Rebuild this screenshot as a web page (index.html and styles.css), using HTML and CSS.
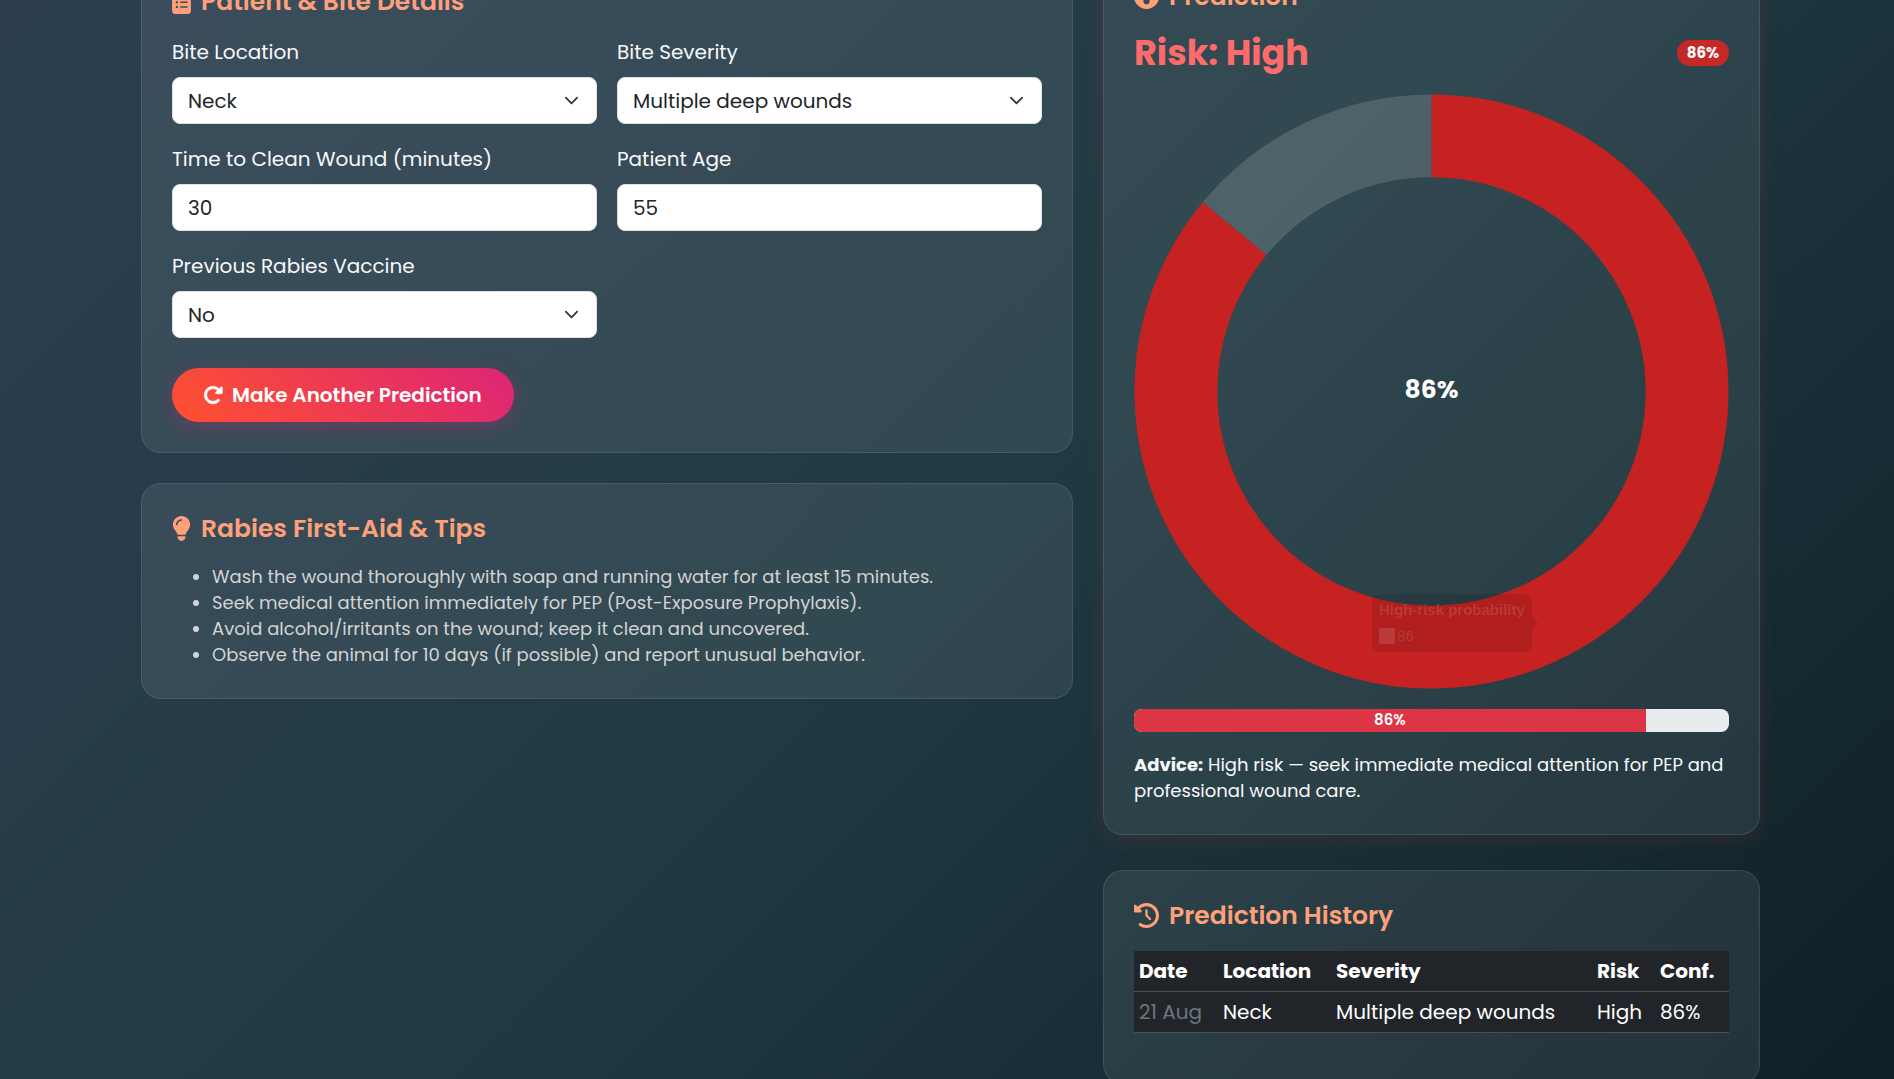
FILE: index.html
```html
<!DOCTYPE html>
<html lang="en">
<head>
<meta charset="utf-8">
<meta name="viewport" content="width=device-width, initial-scale=1">
<title>Rabies Risk Prediction</title>
<link rel="stylesheet" href="styles.css">
</head>
<body>
<main class="page">
  <div class="column">
    <section class="card">
      <h2 class="card-title">
        <svg class="icon" width="19" height="25" viewBox="0 0 384 512" aria-hidden="true"><path fill="currentColor" fill-rule="evenodd" d="M192 0c-41.800 0-77.400 26.700-90.500 64L64 64C28.700 64 0 92.700 0 128L0 448c0 35.300 28.700 64 64 64l256 0c35.300 0 64-28.700 64-64l0-320c0-35.300-28.700-64-64-64l-37.500 0C269.400 26.700 233.800 0 192 0zm0 64a32 32 0 1 1 0 64 32 32 0 1 1 0-64zM72 272a24 24 0 1 1 48 0 24 24 0 1 1-48 0zm104-16l128 0c8.800 0 16 7.200 16 16s-7.200 16-16 16l-128 0c-8.800 0-16-7.200-16-16s7.200-16 16-16zM72 368a24 24 0 1 1 48 0 24 24 0 1 1-48 0zm88 0c0-8.800 7.200-16 16-16l128 0c8.800 0 16 7.200 16 16s-7.200 16-16 16l-128 0c-8.800 0-16-7.200-16-16z"/></svg>
        Patient &amp; Bite Details
      </h2>
      <form>
        <div class="fields">
          <div class="field">
            <label for="location">Bite Location</label>
            <div class="select-wrap">
              <select class="control" id="location"><option>Neck</option></select>
              <svg class="chevron" viewBox="0 0 16 16" aria-hidden="true"><path d="m2 5 6 6 6-6"/></svg>
            </div>
          </div>
          <div class="field">
            <label for="severity">Bite Severity</label>
            <div class="select-wrap">
              <select class="control" id="severity"><option>Multiple deep wounds</option></select>
              <svg class="chevron" viewBox="0 0 16 16" aria-hidden="true"><path d="m2 5 6 6 6-6"/></svg>
            </div>
          </div>
          <div class="field">
            <label for="minutes">Time to Clean Wound (minutes)</label>
            <input class="control" id="minutes" type="text" inputmode="numeric" value="30">
          </div>
          <div class="field">
            <label for="age">Patient Age</label>
            <input class="control" id="age" type="text" inputmode="numeric" value="55">
          </div>
          <div class="field">
            <label for="vaccine">Previous Rabies Vaccine</label>
            <div class="select-wrap">
              <select class="control" id="vaccine"><option>No</option></select>
              <svg class="chevron" viewBox="0 0 16 16" aria-hidden="true"><path d="m2 5 6 6 6-6"/></svg>
            </div>
          </div>
        </div>
        <button class="predict" type="submit">
          <svg width="20" height="20" viewBox="0 0 512 512" aria-hidden="true"><path fill="currentColor" stroke="currentColor" stroke-width="16" d="M463.500 224l8.500 0c13.300 0 24-10.700 24-24l0-128c0-9.700-5.800-18.500-14.800-22.200s-19.300-1.700-26.200 5.200L413.400 96.600c-87.600-86.500-228.700-86.200-315.800 1c-87.500 87.500-87.500 229.300 0 316.800s229.300 87.500 316.800 0c12.500-12.500 12.500-32.800 0-45.300s-32.800-12.500-45.300 0c-62.500 62.500-163.800 62.500-226.300 0s-62.500-163.800 0-226.300c62.200-62.200 162.700-62.500 225.300-1L327 183c-6.900 6.900-8.900 17.200-5.200 26.200s12.500 14.800 22.200 14.800l119.500 0z"/></svg>
          Make Another Prediction
        </button>
      </form>
    </section>

    <section class="card">
      <h2 class="card-title">
        <svg class="icon" width="19" height="25" viewBox="0 0 384 512" aria-hidden="true"><path fill="currentColor" fill-rule="evenodd" d="M272 384c9.600-31.900 29.500-59.100 49.200-86.200c5.200-7.100 10.400-14.200 15.400-21.400c19.800-28.500 31.400-63 31.400-100.300C368 78.800 289.200 0 192 0S16 78.800 16 176c0 37.300 11.600 71.900 31.400 100.300c5 7.200 10.200 14.300 15.400 21.400c19.800 27.100 39.700 54.400 49.200 86.200l160 0zM192 512c44.200 0 80-35.800 80-80l0-16-160 0 0 16c0 44.200 35.800 80 80 80zM112 176c0 8.800-7.200 16-16 16s-16-7.200-16-16c0-61.900 50.100-112 112-112c8.800 0 16 7.200 16 16s-7.200 16-16 16c-44.200 0-80 35.800-80 80z"/></svg>
        Rabies First-Aid &amp; Tips
      </h2>
      <ul class="tips">
        <li>Wash the wound thoroughly with soap and running water for at least 15 minutes.</li>
        <li>Seek medical attention immediately for PEP (Post-Exposure Prophylaxis).</li>
        <li>Avoid alcohol/irritants on the wound; keep it clean and uncovered.</li>
        <li>Observe the animal for 10 days (if possible) and report unusual behavior.</li>
      </ul>
    </section>
  </div>

  <div class="column">
    <section class="card card-raised">
      <h2 class="card-title">
        <svg class="icon" width="25" height="25" viewBox="0 0 512 512" aria-hidden="true"><path fill="currentColor" fill-rule="evenodd" d="M0 256a256 256 0 1 1 512 0A256 256 0 1 1 0 256zM256 416c35.300 0 64-28.700 64-64c0-17.400-6.900-33.100-18.100-44.600L366 161.700c5.300-12.100-.2-26.300-12.300-31.600s-26.300 .2-31.600 12.300L257.900 288c-.6 0-1.300 0-1.900 0c-35.300 0-64 28.700-64 64s28.700 64 64 64z"/></svg>
        Prediction
      </h2>
      <div class="risk-row">
        <p class="risk">Risk: High</p>
        <span class="badge">86%</span>
      </div>
      <div class="chart">
        <svg class="donut" viewBox="0 0 596 596" role="img" aria-label="High-risk probability 86%">
          <g fill="none" stroke-width="83" transform="rotate(-90 298 298)">
            <circle class="donut-rest" cx="298" cy="298" r="256" pathLength="100" stroke-dasharray="0 86 14 0"/>
            <circle class="donut-value" cx="298" cy="298" r="256" pathLength="100" stroke-dasharray="86 14"/>
          </g>
        </svg>
        <strong class="donut-label">86%</strong>
        <div class="tooltip">
          <b>High-risk probability</b>
          <span class="tooltip-row"><i class="swatch"></i>86</span>
        </div>
      </div>
      <div class="progress">
        <div class="progress-bar" style="width: 86%">86%</div>
      </div>
      <p class="advice"><strong>Advice:</strong> High risk — seek immediate medical attention for PEP and professional wound care.</p>
    </section>

    <section class="card">
      <h2 class="card-title">
        <svg class="icon" width="25" height="25" viewBox="0 0 512 512" aria-hidden="true"><path fill="currentColor" d="M75 75L41 41C25.900 25.900 0 36.600 0 57.900L0 168c0 13.300 10.700 24 24 24l110.100 0c21.400 0 32.100-25.900 17-41l-30.800-30.800C155 85.500 203 64 256 64c106 0 192 86 192 192s-86 192-192 192c-40.800 0-78.600-12.700-109.700-34.400c-14.500-10.100-34.400-6.600-44.600 7.900s-6.600 34.400 7.900 44.600C151.200 495 201.700 512 256 512c141.400 0 256-114.600 256-256S397.400 0 256 0C185.300 0 121.300 28.700 75 75zm181 53c-13.300 0-24 10.700-24 24l0 104c0 6.400 2.500 12.500 7 17l72 72c9.400 9.400 24.600 9.400 33.900 0s9.400-24.600 0-33.900l-65-65 0-94.100c0-13.300-10.700-24-24-24z"/></svg>
        Prediction History
      </h2>
      <table class="history">
        <thead>
          <tr><th class="col-date" scope="col">Date</th><th class="col-location" scope="col">Location</th><th scope="col">Severity</th><th class="col-risk" scope="col">Risk</th><th class="col-conf" scope="col">Conf.</th></tr>
        </thead>
        <tbody>
          <tr><td class="muted">21 Aug</td><td>Neck</td><td>Multiple deep wounds</td><td>High</td><td>86%</td></tr>
        </tbody>
      </table>
    </section>
  </div>
</main>
</body>
</html>
```
FILE: styles.css
```css
* {
  box-sizing: border-box;
}

html {
  background: #0f2027;
}

body {
  margin: 0;
  min-height: 100vh;
  overflow: hidden;
  background: linear-gradient(135deg, #2c3e50 0%, #203a43 50%, #0f2027 100%);
  color: #f8f9fa;
  font-family: Poppins, Inter, "Noto Sans", sans-serif;
  font-size: 20px;
  line-height: 30px;
}

h2,
p,
ul {
  margin: 0;
}

/* The page is scrolled past the card tops. */
.page {
  display: grid;
  grid-template-columns: 932fr 657fr;
  align-items: start;
  gap: 30px;
  max-width: 1650px;
  margin: -44px auto 0;
  padding: 0 12px 0 19px;
}

.column {
  display: grid;
  gap: 30px;
}

.card {
  padding: 30px;
  border: 1px solid rgba(255, 255, 255, 0.1);
  border-radius: 20px;
  background: rgba(255, 255, 255, 0.08);
}

.card-raised {
  transform: translateY(-5px);
  box-shadow: 0 5px 20px rgba(255, 75, 43, 0.12);
}

.card-title {
  display: flex;
  align-items: center;
  gap: 10px;
  margin-bottom: 20px;
  color: #ffa07a;
  font-size: 25px;
  font-weight: 600;
  line-height: 30px;
}

.icon {
  flex: none;
  margin-bottom: 2px;
}

.fields {
  display: grid;
  grid-template-columns: 1fr 1fr;
  gap: 20px;
}

.field {
  display: grid;
  gap: 10px;
}

.select-wrap {
  position: relative;
}

.control {
  display: block;
  width: 100%;
  height: 47px;
  padding: 0 15px;
  border: 1px solid #dee2e6;
  border-radius: 8px;
  background: #fff;
  color: #212529;
  font: inherit;
  appearance: none;
}

.chevron {
  position: absolute;
  top: 16px;
  right: 18px;
  width: 15px;
  height: 15px;
  fill: none;
  stroke: #343a40;
  stroke-width: 2;
  stroke-linecap: round;
  stroke-linejoin: round;
  pointer-events: none;
}

.predict {
  display: flex;
  align-items: center;
  gap: 9px;
  margin-top: 30px;
  height: 54px;
  padding: 0 32px 0 31px;
  border: 0;
  border-radius: 28px;
  background: linear-gradient(45deg, #ff512f, #dd2476);
  box-shadow: 0 5px 19px rgba(221, 36, 118, 0.3);
  color: #fff;
  font: inherit;
  font-weight: 600;
}

.tips {
  padding-left: 40px;
  color: #d3d3d3;
  font-size: 18px;
  line-height: 26px;
}

.risk-row {
  display: flex;
  align-items: center;
  justify-content: space-between;
  margin-bottom: 20px;
}

.risk {
  color: #ff6b6b;
  font-size: 35px;
  font-weight: 700;
  line-height: 42px;
}

.badge {
  padding: 0 10px;
  border-radius: 13px;
  background: #c62828;
  color: #fff;
  font-size: 15px;
  font-weight: 700;
  line-height: 26px;
}

.chart {
  position: relative;
  margin-bottom: 20px;
}

.donut {
  display: block;
  width: 100%;
}

.donut-rest {
  stroke: rgba(255, 255, 255, 0.14);
}

.donut-value {
  stroke: #c62222;
}

.donut-label {
  position: absolute;
  inset: 0;
  display: grid;
  place-items: center;
  padding-bottom: 4px;
  color: #fff;
  font-size: 25px;
}

.tooltip {
  position: absolute;
  top: 84%;
  left: 40%;
  display: grid;
  gap: 8px;
  padding: 7px;
  border-radius: 8px;
  background: rgba(0, 0, 0, 0.1);
  color: rgba(255, 255, 255, 0.12);
  font-family: "Liberation Sans", Arial, sans-serif;
  font-size: 15px;
  line-height: 18px;
}

.tooltip::after {
  content: "";
  position: absolute;
  top: 50%;
  left: 100%;
  border: 6px solid transparent;
  border-right: 0;
  border-left-color: rgba(0, 0, 0, 0.1);
  transform: translateY(-50%);
}

.tooltip-row {
  display: flex;
  align-items: center;
  gap: 2px;
}

.swatch {
  width: 16px;
  height: 16px;
  background: rgba(255, 255, 255, 0.12);
}

.progress {
  display: flex;
  height: 23px;
  margin-bottom: 20px;
  border-radius: 8px;
  overflow: hidden;
  background: #e9ecef;
}

.progress-bar {
  background: #dc3545;
  color: #fff;
  font-size: 15px;
  font-weight: 600;
  line-height: 22px;
  text-align: center;
}

.advice {
  font-size: 18px;
  line-height: 26px;
}

.history {
  width: 100%;
  margin-bottom: 20px;
  border-collapse: collapse;
  table-layout: fixed;
  background: #212529;
  color: #fff;
}

.history th,
.history td {
  padding: 5px;
  border-bottom: 1px solid #4d5154;
  text-align: left;
  white-space: nowrap;
}

.history th {
  font-weight: 700;
}

.history .muted {
  color: #6c757d;
}

.col-date {
  width: 84px;
}

.col-location {
  width: 113px;
}

.col-risk {
  width: 63px;
}

.col-conf {
  width: 74px;
}
```
